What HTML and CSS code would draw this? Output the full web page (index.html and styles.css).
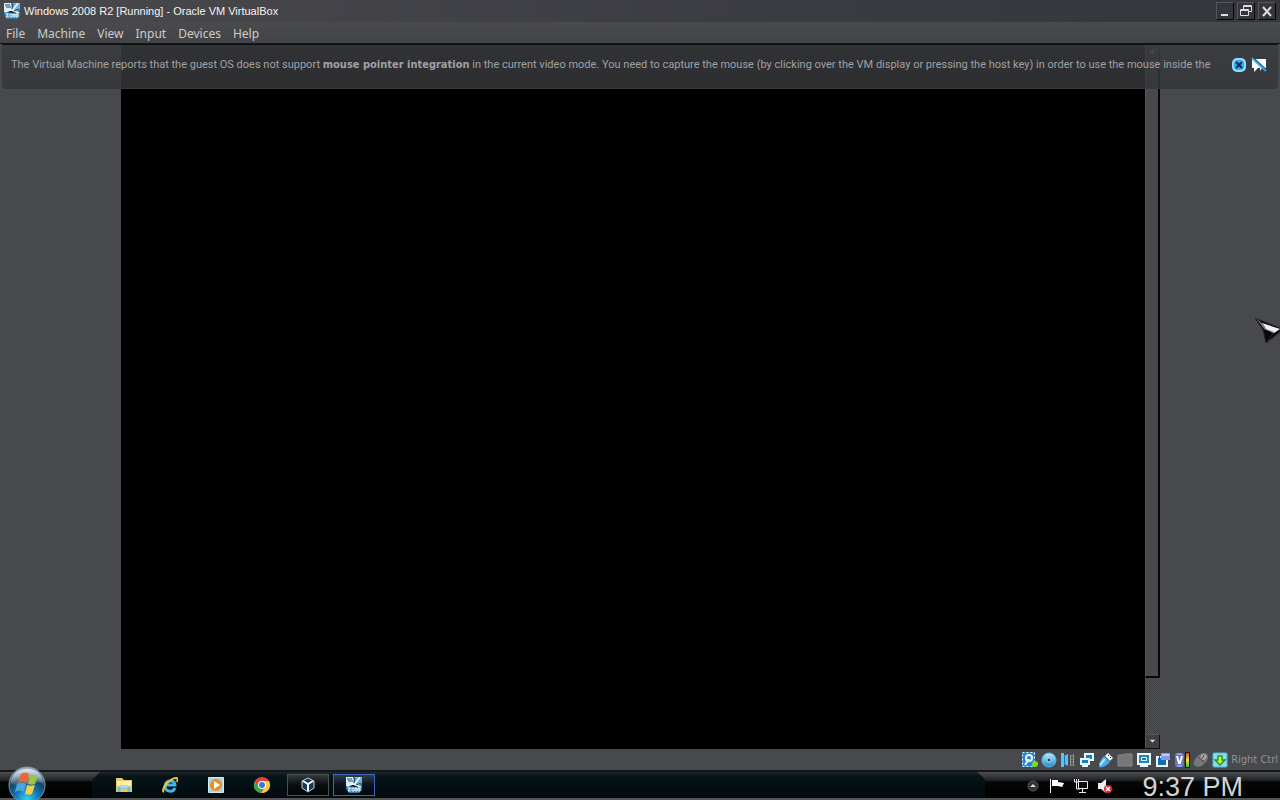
FILE: index.html
```html
<!DOCTYPE html>
<html lang="en">
<head>
    <meta charset="UTF-8">
    <title>Windows 2008 R2 [Running] - Oracle VM VirtualBox</title>
    <link rel="stylesheet" href="styles.css">
</head>
<body>
    <svg class="defs" aria-hidden="true">
        <defs>
            <linearGradient id="sky" x2="0" y2="1"><stop stop-color="#b9ebfa"/><stop offset="1" stop-color="#238bd0"/></linearGradient>
            <radialGradient id="orb" cx=".5" cy=".9" r=".9"><stop stop-color="#31d5f5"/><stop offset=".35" stop-color="#127bb4"/><stop offset=".65" stop-color="#174468"/><stop offset="1" stop-color="#a8b8c4"/></radialGradient>
            <linearGradient id="shine" x2="0" y2="1"><stop stop-color="#fff" stop-opacity=".75"/><stop offset="1" stop-color="#fff" stop-opacity=".1"/></linearGradient>
            <linearGradient id="level" x2="0" y2="1"><stop stop-color="#e33b22"/><stop offset=".5" stop-color="#f5e43a"/><stop offset="1" stop-color="#3dbb2b"/></linearGradient>
            <symbol id="vm" viewBox="0 0 16 16">
                <path fill="#277ca9" d="M0 0h16v13l-3 3H3l-3-4z"/>
                <path fill="#d9edf3" d="M0 0h7l1 6-2 3H0z"/>
                <path fill="#6db7d5" d="M9 0h7v6l-4 3-4-3zM1 10h5l-2 4z"/>
                <path stroke="#f4fbfd" stroke-width="1.500" d="M14 0 8 8M1 9l6-2 8 3"/>
                <path stroke="#1b4b6d" d="M1 2h5M2 4h5M9 1l-1 5M10 8l5-2"/>
                <path fill="none" stroke="#e9f4f7" d="M2 11h2l-2 3h3M6 11h2v3H6zM9 11h2v3H9zM9 12h2M12 11h2v3h-2zM12 12h2"/>
            </symbol>
        </defs>
    </svg>

    <header class="titlebar">
        <svg class="icon"><use href="#vm"/></svg>
        <h1>Windows 2008 R2 [Running] - Oracle VM VirtualBox</h1>
        <div class="window-buttons">
            <button aria-label="Minimize"><svg viewBox="0 0 16 16"><path stroke="#ddd" stroke-width="2" d="M4 12h7"/></svg></button>
            <button aria-label="Restore"><svg viewBox="0 0 16 16"><path fill="none" stroke="#ddd" d="M5.500 6V2.500h8v6H11M5 3.500h8M2.500 6.500h8v6h-8zM2 7.500h8"/></svg></button>
            <button aria-label="Close"><svg viewBox="0 0 16 16"><path stroke="#ddd" stroke-width="2" d="m4 4 8 9M12 4l-8 9"/></svg></button>
        </div>
    </header>

    <nav class="menubar">
        <button>File</button>
        <button>Machine</button>
        <button>View</button>
        <button>Input</button>
        <button>Devices</button>
        <button>Help</button>
    </nav>

    <main class="stage">
        <div class="guest"></div>
        <div class="scrollbar">
            <button aria-label="Scroll up"><svg viewBox="0 0 14 14"><path fill="#bbb" d="m4 8 3-3 3 3z"/></svg></button>
            <div class="thumb"></div>
            <div class="track"></div>
            <button aria-label="Scroll down"><svg viewBox="0 0 14 14"><path fill="#ddd" d="m4 5 3 3 3-3z"/></svg></button>
        </div>
        <div class="message">
            <p>The Virtual Machine reports that the guest OS does not support <b>mouse pointer integration</b> in the current video mode. You need to capture the mouse (by clicking over the VM display or pressing the host key) in order to use the mouse inside the</p>
            <button aria-label="Close message"><svg viewBox="0 0 16 16"><rect x="1" y="1" width="14" height="14" rx="5" fill="#8ddcff"/><rect x="3" y="3" width="10" height="10" rx="4" fill="#35a9e8"/><path stroke="#0b2c50" stroke-width="2" d="m5 5 6 6M11 5l-6 6"/></svg></button>
            <button aria-label="Do not show again"><svg viewBox="0 0 16 16"><path fill="#f5fbff" d="M1 2h14v9h-4l-2 3v-3H7l-4 4v-4H1z"/><path stroke="#17344f" stroke-width="2" d="m2 1 13 12"/><path stroke="#3aa4e4" stroke-width="2" d="m1 1 14 13"/></svg></button>
        </div>
        <svg class="pointer" viewBox="0 0 26 28"><path fill="#08080a" stroke="#26282b" d="m1 1 25 10v4L12 26 9 13z"/><path fill="#f2f2f2" d="m8 6 18 6-6 4-9-4z"/><path fill="#777" d="m2 1 8 7 2 4 8 3-6 9-1 1 6-9-9-4z"/></svg>
    </main>

    <footer class="statusbar">
        <svg class="icon" viewBox="0 0 16 16"><rect width="13" height="15" rx="1" fill="#2686cf"/><path stroke="#e4f7ff" stroke-dasharray="2" fill="none" d="M.5.500h12v14H.5z"/><circle cx="7" cy="6" r="4" fill="#e4f7ff"/><circle cx="7" cy="6" r="2" fill="#287eaf"/><path stroke="#e4f7ff" stroke-width="2" d="m7 7-4 6"/><circle cx="13" cy="12" r="3" fill="#75df22"/></svg>
        <svg class="icon" viewBox="0 0 16 16"><circle cx="8" cy="8" r="7" fill="url(#sky)" stroke="#56b8eb"/><circle cx="8" cy="8" r="2" fill="#123f63" stroke="#b5e6f9"/></svg>
        <svg class="icon" viewBox="0 0 16 16"><path fill="#62bdee" d="M1 1h3v3l4-2v12l-4-2v3H1z"/><path stroke="#1977b9" d="M4.500 4v8"/><path stroke="#8d959a" d="M10.500 3v11M13.500 2v12M10 4h4M10 7h4M10 10h4M10 13h4"/></svg>
        <svg class="icon" viewBox="0 0 16 16"><path fill="#1783bd" stroke="#e5f7ff" stroke-width="2" d="M6 2h8v6H6z"/><path fill="#1783bd" stroke="#e5f7ff" stroke-width="2" d="M2 7h8v5H2z"/><path stroke="#e5f7ff" stroke-width="2" d="M3 14h6"/></svg>
        <svg class="icon" viewBox="0 0 16 16"><path fill="#eef4f7" d="m10 1 5 5-3 3-5-5z"/><path fill="#48acea" d="m6 4 6 6c-3 3-6 6-11 5 0-5 2-8 5-11z"/><path stroke="#b3e5ff" stroke-width="2" d="m7 7-5 6"/><path stroke="#334" d="m10 3 1 1M12 5l1 1"/></svg>
        <svg class="icon" viewBox="0 0 16 16"><path fill="#777" stroke="#858585" d="M1 3h5l1-1h8v12H1z"/></svg>
        <svg class="icon" viewBox="0 0 16 16"><path fill="#e9faff" d="M1 1h14v12h-3v2H4v-2H1z"/><path fill="#2385bc" d="M3 3h10v8H3z"/><path fill="#237da9" stroke="#e9faff" d="M5.500 5.500h5v3h-5z"/></svg>
        <svg class="icon" viewBox="0 0 16 16"><path fill="#176bb1" stroke="#ecf8ff" stroke-width="2" d="M2 5h10v9H2z"/><path fill="#799dff" d="M6 1h9v7H6z"/><path fill="#b8ccff" d="M7 2h7v2H7z"/><path stroke="#254e9d" d="M4.500 2v6"/></svg>
        <svg class="icon" viewBox="0 0 16 16"><rect x="1" y="1" width="9" height="14" rx="2" fill="#6475c9"/><path fill="none" stroke="#fff" stroke-width="2" d="m3 4 2 7h1l2-7"/><path stroke="#b6c7ff" d="M3 2h5M3 14h5"/><path fill="url(#level)" stroke="#111" d="M11.500.500h4v15h-4z"/></svg>
        <svg class="icon" viewBox="0 0 16 16"><path fill="#777" d="M4 5c3-4 7-5 10-3 2 3 1 6-2 9-3 4-8 5-11 2-1-3 0-5 3-8z"/><path fill="#aaa" d="M8 3c5-3 8 2 3 5-3 0-4-2-3-5z"/><path fill="none" stroke="#494949" d="m5 5 6 5M11 3l-2 4"/></svg>
        <svg class="icon" viewBox="0 0 16 16"><rect x="1" y="1" width="14" height="14" rx="1" fill="#86ddea" stroke="#4eb8e3"/><path fill="#d7f71b" stroke="#249632" stroke-width="1.500" d="M6 4h4v4h3l-5 5-5-5h3z"/></svg>
        <span>Right Ctrl</span>
    </footer>

    <div class="taskbar">
        <button class="start" aria-label="Start">
            <svg viewBox="0 0 38 36"><circle cx="19" cy="19" r="18" fill="url(#orb)" stroke="#7c96a5"/><path fill="url(#shine)" d="M3 17C4-2 34-2 35 17 25 14 13 23 3 17z"/><path fill="#ef6733" d="M13 8c4-2 6-1 8 0l-2 9c-3-2-6-2-9 0z"/><path fill="#99c643" d="M22 9c3 1 5 1 8 0l-3 9c-2 1-4 1-7 0z"/><path fill="#49a5df" d="M9 18c3-2 6-1 9 0l-2 8c-3-2-6-2-9 0z"/><path fill="#f5ce48" d="M19 19c3 1 5 1 8 0l-3 9c-2 1-4 1-7 0z"/></svg>
        </button>
        <div class="task-items">
            <button aria-label="Explorer"><svg class="icon" viewBox="0 0 16 16"><path fill="#e9c965" d="M0 1h6l2 2h8v12H0z"/><path fill="#fff0a9" d="M1 4h14v5H1z"/><path fill="none" stroke="#6ac2e8" stroke-width="3" d="M3 15v-3l2-2h6l2 2v3"/><path stroke="#d8f4fc" d="M4 10h8"/></svg></button>
            <button aria-label="Internet Explorer"><svg class="icon" viewBox="0 0 16 16"><path fill="none" stroke="#44b5ec" stroke-width="3" d="M13 11c-2 5-10 4-10-2S13 2 13 8H4"/><path fill="none" stroke="#f3c62f" stroke-width="2" d="M2 15c-4-2 6-14 12-14 2 0 2 2 1 4"/></svg></button>
            <button aria-label="Media Player"><svg class="icon" viewBox="0 0 16 16"><path fill="#a8d4e7" stroke="#d0edf7" d="M.5.500h15v15H.5z"/><circle cx="8" cy="8" r="6" fill="#f08c1f"/><path fill="#fff" d="m6 4 6 4-6 4z"/></svg></button>
            <button aria-label="Chrome"><svg class="icon" viewBox="0 0 16 16"><circle cx="8" cy="8" r="8" fill="#e54335"/><path fill="#fbc934" d="M8 4h7c3 6-1 12-8 12l4-6z"/><path fill="#35a853" d="m1 4 4 6 4 1-2 5C0 15-2 9 1 4z"/><circle cx="8" cy="8" r="4" fill="#fff"/><circle cx="8" cy="8" r="3" fill="#3777dc"/></svg></button>
            <button class="open" aria-label="VirtualBox Manager"><svg class="icon" viewBox="0 0 16 16"><path fill="#183854" stroke="#b9d3e3" d="m8 1 6 3v7l-6 4-6-4V4z"/><path fill="none" stroke="#eef7fb" stroke-width="2" d="m3 4 5 3 5-3M8 7v7"/></svg></button>
            <button class="open active" aria-label="Windows 2008 R2"><svg class="icon"><use href="#vm"/></svg></button>
        </div>
        <div class="tray">
            <button aria-label="Show hidden icons"><svg class="icon" viewBox="0 0 16 16"><circle cx="8" cy="8" r="5" fill="#333" stroke="#555"/><path fill="#ddd" d="m5 9 3-3 3 3z"/></svg></button>
            <button aria-label="Action Center"><svg class="icon" viewBox="0 0 16 16"><path stroke="#eee" d="M1.500 1v14"/><path fill="#fff" d="M3 2h6v2l6 1-2 4-4-1H3z"/></svg></button>
            <button aria-label="Network"><svg class="icon" viewBox="0 0 16 16"><path fill="#080808" stroke="#eee" d="M5.500 3.500h9v7h-9zM9.500 11v3M6 14.500h7M1.500 1v3h4V1M3.500 1v10H7"/></svg></button>
            <button aria-label="Volume muted"><svg class="icon" viewBox="0 0 16 16"><path fill="#eee" d="M1 5h3l5-4v14l-5-4H1z"/><circle cx="11" cy="11" r="4" fill="#db2739"/><path stroke="#fff" stroke-width="1.500" d="m9 9 4 4M13 9l-4 4"/></svg></button>
            <time>9:37 PM</time>
        </div>
    </div>
</body>
</html>
```
FILE: styles.css
```css
* { box-sizing: border-box; }
body { margin: 0; height: 100vh; display: flex; flex-direction: column; overflow: hidden; background: #48494d; color: #ccc; font-family: "Noto Sans", Tahoma, sans-serif; font-size: 12px; }
button { padding: 0; border: none; background: none; color: inherit; font: inherit; }
svg { display: block; flex: none; }
.defs { position: absolute; width: 0; height: 0; }
.icon { width: 16px; height: 16px; }

.titlebar { flex: none; height: 22px; display: flex; align-items: center; gap: 4px; padding: 0 4px; background: linear-gradient(90deg, #49494d, #3b3c42 60%, #35363d); }
.titlebar h1 { flex: 1; margin: 0; color: #f4f4f4; font: 11px "Liberation Sans", Arial, sans-serif; }
.window-buttons { display: flex; gap: 3px; }
.window-buttons button { width: 18px; height: 18px; border: 1px solid #55565b; border-right-color: #08080a; border-bottom-color: #08080a; background: #35363b; }
.window-buttons svg { width: 16px; height: 16px; }

.menubar { flex: none; height: 22px; display: flex; align-items: center; gap: 12px; padding: 2px 6px 0; border-bottom: 1px solid #111; background: linear-gradient(#494a4d, #434448); }

.stage { position: relative; flex: 1; display: flex; min-height: 0; padding: 0 120px 0 121px; }
.guest { flex: 1; background: #000; }
.scrollbar { width: 15px; display: flex; flex-direction: column; background: #48494d; }
.scrollbar button { height: 15px; border: 1px solid #56575b; border-right-color: #111; border-bottom-color: #111; background: #3e3f43; }
.scrollbar svg { width: 13px; height: 13px; }
.thumb { flex: 11; border: 1px solid #56575b; border-right: 2px solid #080808; border-bottom: 2px solid #080808; }
.track { flex: 1; background: repeating-conic-gradient(#3b3c40 0 25%, #55565a 0 50%) 0 0 / 2px 2px; }

.message { position: absolute; top: 0; left: 2px; right: 2px; height: 45px; display: flex; align-items: center; gap: 4px; padding: 0 10px 4px 8px; border: 1px solid #38393d; border-top-color: #101113; border-radius: 0 0 4px 4px; background: linear-gradient(rgba(58, 59, 64, 0.85), rgba(52, 53, 55, 0.85)); color: #a0a1a3; font: 11px Roboto, Tahoma, sans-serif; }
.message p { flex: 1; min-width: 0; margin: 0; white-space: nowrap; }
.message b { font-family: "DejaVu Sans Condensed", "DejaVu Sans", sans-serif; }
.message button { flex: none; }
.message svg { width: 16px; height: 16px; }
.pointer { position: absolute; right: 0; top: 273px; width: 26px; height: 28px; }

.statusbar { flex: none; height: 21px; display: flex; align-items: center; justify-content: flex-end; gap: 3px; padding-right: 2px; color: #909194; font: 11px "DejaVu Sans Condensed", "DejaVu Sans", sans-serif; }

.taskbar { position: relative; flex: none; height: 30px; display: flex; justify-content: space-between; border-top: 2px solid #15171a; border-bottom: 2px solid #555; background: linear-gradient(#4b4d4f, #222426 8px, #050606 10px, #000); }
.start { position: absolute; z-index: 1; left: 8px; bottom: -4px; }
.start svg { width: 38px; height: 36px; }
.task-items { flex: 1; display: flex; align-items: center; gap: 4px; margin-left: 92px; padding-left: 11px; background: linear-gradient(#202a2d, #071317 4px, #020b0e); clip-path: polygon(8px 0, calc(100% - 8px) 0, 100% 8px, 100% 100%, 0 100%, 0 8px); }
.task-items button { width: 42px; height: 22px; display: flex; align-items: center; justify-content: center; }
.task-items .open { border: 1px solid #4b5152; background: linear-gradient(#343a3b, #0b0e0f 50%, #040606); }
.task-items .active { border-color: #4165b8; background: linear-gradient(#2e3e4b, #0a131d 50%, #04090e); }
.tray { display: flex; align-items: center; gap: 8px; padding: 2px 37px 0 40px; }
.tray time { margin-left: 21px; padding-top: 2px; color: #d3d4d5; font: 27px/26px "Liberation Sans", Arial, sans-serif; }
```
